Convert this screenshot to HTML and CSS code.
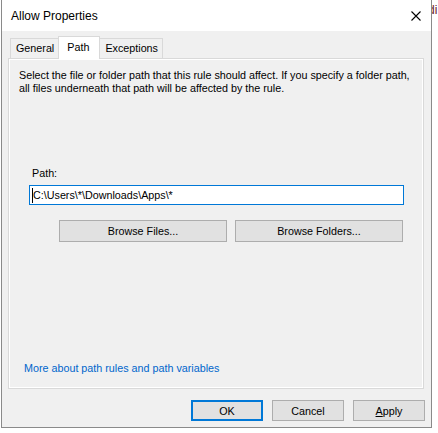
FILE: index.html
```html
<!DOCTYPE html>
<html>
<head>
<meta charset="utf-8">
<link rel="stylesheet" href="styles.css">
</head>
<body>
<div class="behind">di</div>
<div class="window">
  <div class="titlebar">
    <span class="title">Allow Properties</span>
    <svg class="close" width="10" height="10" viewBox="0 0 10 10"><path d="M0.5 0.5 L9.5 9.5 M9.5 0.5 L0.5 9.5" stroke="#000" stroke-width="1.1" fill="none"/></svg>
  </div>
  <div class="client">
    <div class="tabs">
      <div class="tab">General</div>
      <div class="tab selected">Path</div>
      <div class="tab">Exceptions</div>
    </div>
    <div class="panel">
      <p class="desc">Select the file or folder path that this rule should affect. If you specify a folder path,<br>all files underneath that path will be affected by the rule.</p>
      <label class="label">Path:</label>
      <div class="input"><span class="caret"></span>C:\Users\*\Downloads\Apps\*</div>
      <div class="browse">
        <button class="btn wide">Browse Files...</button>
        <button class="btn wide">Browse Folders...</button>
      </div>
      <a class="link">More about path rules and path variables</a>
    </div>
    <div class="footer">
      <button class="btn dlg default">OK</button>
      <button class="btn dlg">Cancel</button>
      <button class="btn dlg"><u>A</u>pply</button>
    </div>
  </div>
</div>
</body>
</html>
```
FILE: styles.css
```css
html, body {
  margin: 0;
  padding: 0;
  background: #ffffff;
  width: 438px;
  height: 433px;
  overflow: hidden;
  font-family: "Liberation Sans", Arial, sans-serif;
  font-size: 10.75px;
  color: #000;
}
.behind {
  position: absolute;
  left: 428px;
  top: 3px;
  color: #6b1a2a;
  font-size: 12px;
}
.window {
  position: relative;
  margin-left: 1px;
  width: 429px;
  height: 427px;
  border: 1px solid #8a8a8a;
  border-top: none;
  display: flex;
  flex-direction: column;
  background: #f0f0f0;
}
.titlebar {
  height: 31px;
  background: #fff;
  display: flex;
  align-items: center;
  justify-content: space-between;
  padding: 0 10px 0 9px;
  flex: none;
}
.title {
  font-size: 12px;
  margin-top: 1px;
}
.close {
  display: block;
}
.client {
  flex: 1;
  display: flex;
  flex-direction: column;
  padding: 5px 7px 0 6px;
}
.tabs {
  display: flex;
  padding-left: 2px;
  height: 22px;
  align-items: flex-end;
}
.tab {
  line-height: 19px;
  padding: 0 4px 0 5px;
  border: 1px solid #d9d9d9;
  border-bottom: none;
  margin-right: -1px;
  background: #f0f0f0;
  box-sizing: border-box;
  height: 20px;
}
.tab.selected {
  line-height: 20px;
  background: #fff;
  padding: 0 10px 0 8px;
  position: relative;
  z-index: 1;
  margin-bottom: -1px;
  height: 23px;
}
.panel {
  height: 331px;
  box-sizing: border-box;
  border: 1px solid #d9d9d9;
  box-shadow: inset 0 0 0 1px #fff;
  background: #f0f0f0;
  display: flex;
  flex-direction: column;
  padding: 10px 0 0 10px;
}
.desc {
  margin: 0;
  line-height: 13px;
}
.label {
  margin: 72px 0 0 13px;
  line-height: 13px;
}
.input {
  margin: 5px 0 0 10px;
  width: 375px;
  height: 20px;
  box-sizing: border-box;
  border: 1px solid #0078d7;
  background: #fff;
  padding-left: 3px;
  line-height: 17px;
  display: flex;
  align-items: center;
  position: relative;
}
.caret {
  position: absolute;
  left: 2px;
  top: 2px;
  width: 1px;
  height: 15px;
  background: #000;
}
.browse {
  display: flex;
  gap: 8px;
  margin: 15px 0 0 40px;
}
.btn {
  font-family: inherit;
  font-size: 10.75px;
  color: #000;
  background: #e1e1e1;
  border: 1px solid #adadad;
  box-sizing: border-box;
  padding: 0;
  margin: 0;
}
.wide {
  width: 168px;
  height: 22px;
}
.link {
  margin: auto 0 13px 5px;
  color: #0066cc;
  line-height: 13px;
}
.footer {
  display: flex;
  justify-content: flex-end;
  gap: 9px;
  padding: 11px 0 0 0;
  margin-right: -1px;
}
.dlg {
  width: 72px;
  height: 21px;
}
.dlg.default {
  border: 2px solid #0078d7;
}
```
